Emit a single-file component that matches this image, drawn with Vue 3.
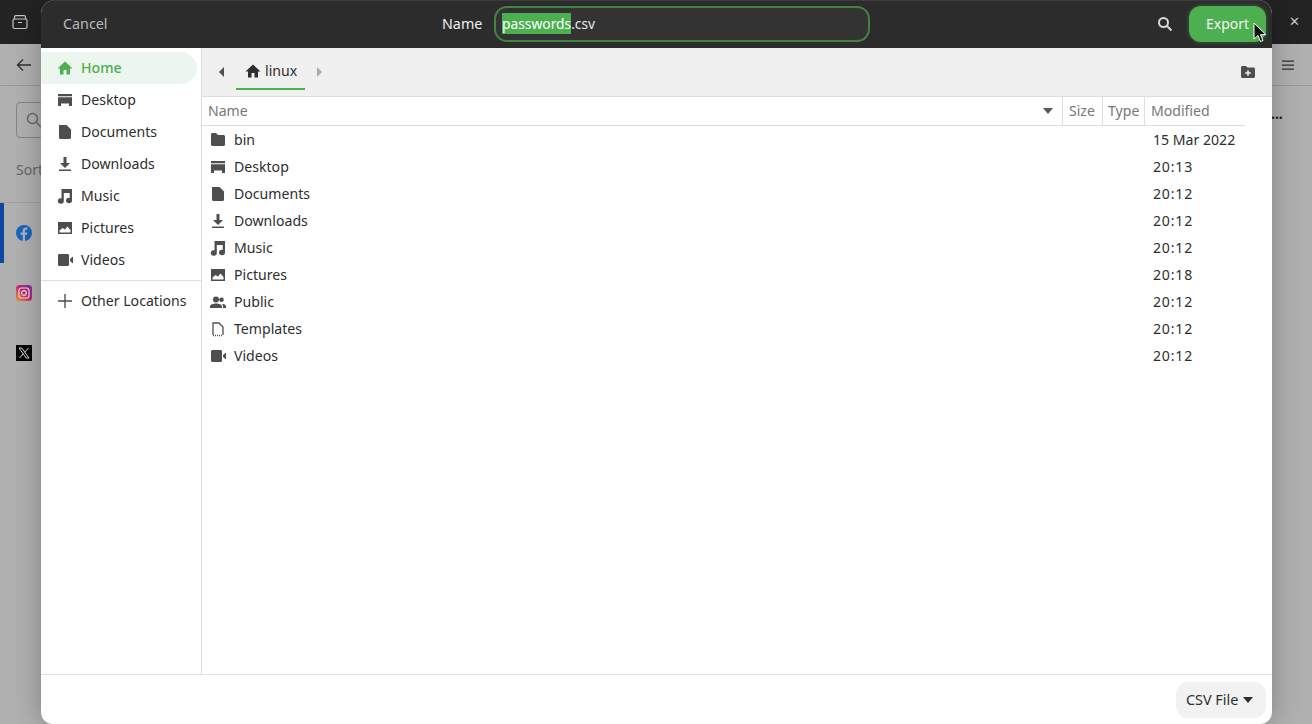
<script setup>
const sidebar = [
  { name: 'Desktop', icon: 'desktop' },
  { name: 'Documents', icon: 'doc' },
  { name: 'Downloads', icon: 'down' },
  { name: 'Music', icon: 'music' },
  { name: 'Pictures', icon: 'pic' },
  { name: 'Videos', icon: 'video' }
]
const files = [
  { name: 'bin', icon: 'folder', mod: '15 Mar 2022' },
  { name: 'Desktop', icon: 'desktop', mod: '20:13' },
  { name: 'Documents', icon: 'doc', mod: '20:12' },
  { name: 'Downloads', icon: 'down', mod: '20:12' },
  { name: 'Music', icon: 'music', mod: '20:12' },
  { name: 'Pictures', icon: 'pic', mod: '20:18' },
  { name: 'Public', icon: 'public', mod: '20:12' },
  { name: 'Templates', icon: 'tmpl', mod: '20:12' },
  { name: 'Videos', icon: 'video', mod: '20:12' }
]
const paths = {
  folder: 'M1 2.500C1 1.700 1.700 1 2.500 1H6l2 2h5.500c.8 0 1.500.7 1.500 1.500v8c0 .8-.7 1.500-1.500 1.500h-11C1.700 14 1 13.300 1 12.500z',
  desktop: 'M1 2h14v2.300H1zM1 5.300h14V14h-3v-2.600H4V14H1z',
  doc: 'M2 1h7.500L14 5.500v8c0 .8-.7 1.500-1.500 1.500h-9C2.700 15 2 14.300 2 13.500z',
  down: 'M6.500 1h3v6H13l-5 5-5-5h3.500zM2 13.500h12V15H2z',
  music: 'M4.500 1H15v11.500a3 2.700 0 1 1-2.300-2.600V5H6.800v8a3 2.700 0 1 1-2.300-2.600z',
  pic: 'M1 2h14v12H1zM2.500 12.500h11V10L10.500 6.500 8 9.500 5.500 8 2.500 10.500z',
  video: 'M1 3.500C1 2.700 1.700 2 2.500 2h8c.8 0 1.500.7 1.500 1.500v9c0 .8-.7 1.500-1.500 1.500h-8C1.700 14 1 13.300 1 12.500zM13 7l3-2.500v7L13 9z',
  public: 'M6 2.500a3 3 0 1 1 0 6 3 3 0 0 1 0-6zM11.500 3.500a2.300 2.300 0 1 1 0 4.600 2.300 2.300 0 0 1 0-4.600zM0 14v-1.500C0 10.500 3 9.500 6 9.500s6 1 6 3V14zM13 14v-1.700c0-1-.5-1.900-1.400-2.600 2.300.1 4.400 1 4.400 2.600V14z'
}
</script>

<template>
  <div class="desk">
    <header class="app-top">
      <svg class="archive" width="16" height="16" viewBox="0 0 16 16" fill="none" stroke="#c8c8c8" stroke-width="1.200">
        <rect x="1" y="5" width="14" height="9.500" rx="1.500" />
        <path d="M2.500 5V3c0-.8.5-1.300 1.300-1.300h8.400c.8 0 1.300.5 1.300 1.300v2M6 8.500h4" />
      </svg>
      <span class="app-close">✕</span>
    </header>
    <div class="app-nav">
      <svg width="16" height="16" viewBox="0 0 16 16" fill="none" stroke="#2e2e2e" stroke-width="1.300"><path d="M15 8H1.500M7 2.500 1.500 8 7 13.500" /></svg>
      <svg class="burger" width="14" height="14" viewBox="0 0 14 14" fill="#2e2e2e"><path d="M1 2.500h12v1.200H1zM1 6.500h12v1.200H1zM1 10.500h12v1.200H1z" /></svg>
    </div>
    <div class="app-search">
      <svg width="16" height="16" viewBox="0 0 16 16" fill="none" stroke="#6a6a6a" stroke-width="1.500"><circle cx="6.500" cy="6.500" r="5" /><path d="m10 10 5 5" /></svg>
    </div>
    <div class="app-sort">Sort</div>
    <div class="app-dots">...</div>
    <div class="app-rail">
      <div class="rail-item active">
        <svg width="16" height="16" viewBox="0 0 16 16"><circle cx="8" cy="8" r="8" fill="#1565c0" /><path d="M9 16V9.800h2l.4-2.400H9V6c0-.8.3-1.200 1.200-1.200h1.300V2.700c-.5-.1-1-.2-1.800-.2C8 2.500 6.700 3.700 6.700 5.700v1.700H4.500v2.400h2.200V16z" fill="#b0b0b0" /></svg>
      </div>
      <div class="rail-item">
        <svg width="16" height="16" viewBox="0 0 16 16" fill="none">
          <defs><linearGradient id="ig" x1="0" y1="1" x2="1" y2="0"><stop offset="0" stop-color="#e0a030" /><stop offset=".5" stop-color="#c8286a" /><stop offset="1" stop-color="#6a30b0" /></linearGradient></defs>
          <rect width="16" height="16" rx="3.500" fill="url(#ig)" />
          <rect x="3" y="3" width="10" height="10" rx="2.500" stroke="#e8d8e0" stroke-width="1.200" />
          <circle cx="8" cy="8" r="2.300" stroke="#e8d8e0" stroke-width="1.200" />
        </svg>
      </div>
      <div class="rail-item">
        <svg width="16" height="16" viewBox="0 0 16 16"><rect width="16" height="16" fill="#000" /><path d="M3 3h2.800l7.200 10h-2.800zM12.500 3 8.700 7.200M7.200 8.800 3.500 13" stroke="#ddd" stroke-width="1" fill="none" /></svg>
      </div>
    </div>

    <div class="dialog">
      <div class="d-head">
        <span class="cancel">Cancel</span>
        <div class="name-area">
          <span class="name-label">Name</span>
          <div class="name-input"><span class="sel">passwords</span>.csv</div>
        </div>
        <div class="head-right">
          <svg width="16" height="16" viewBox="0 0 16 16" fill="none" stroke="#d8d8d8" stroke-width="2"><circle cx="6.500" cy="6.500" r="4.500" /><path d="m10 10 4.500 4.500" /></svg>
          <button class="export">Export</button>
        </div>
      </div>
      <div class="d-body">
        <aside class="side">
          <div class="side-row on">
            <svg class="ic" width="16" height="16" viewBox="0 0 16 16" fill="#4caf50"><path d="M8 1.500 15.500 8.500H13V14.500H9.500V10h-3v4.500H3V8.500H.5z" /></svg>
            <span>Home</span>
          </div>
          <div v-for="s in sidebar" :key="s.name" class="side-row">
            <svg class="ic" width="16" height="16" viewBox="0 0 16 16" fill="#4e4e4e"><path :d="paths[s.icon]" fill-rule="evenodd" /></svg>
            <span>{{ s.name }}</span>
          </div>
          <div class="side-sep"></div>
          <div class="side-row other">
            <svg class="ic" width="16" height="16" viewBox="0 0 16 16" fill="#4e4e4e"><path d="M7.300 1h1.400v6.300H15v1.400H8.700V15H7.300V8.700H1V7.300h6.300z" /></svg>
            <span>Other Locations</span>
          </div>
        </aside>
        <main class="main">
          <div class="pathbar">
            <svg class="arrow" width="8" height="10" viewBox="0 0 8 10" fill="#4e4e4e"><path d="M6 0v10L1 5z" /></svg>
            <div class="crumb">
              <svg width="16" height="16" viewBox="0 0 16 16" fill="#2e2e2e"><path d="M8 1.500 15.500 8.500H13V14.500H9.500V10h-3v4.500H3V8.500H.5z" /></svg>
              <span>linux</span>
            </div>
            <svg class="arrow dim" width="8" height="10" viewBox="0 0 8 10" fill="#aaa"><path d="M2 0v10l5-5z" /></svg>
            <svg class="newfolder" width="16" height="16" viewBox="0 0 16 16" fill="#4e4e4e"><path fill-rule="evenodd" d="M1 3.500C1 2.700 1.700 2 2.500 2H6l1.500 1.500h6c.8 0 1.500.7 1.500 1.500v7.500c0 .8-.7 1.500-1.500 1.500h-11C1.700 14 1 13.300 1 12.500zM7.200 6.200v2H5.200v1.600h2v2h1.600v-2h2V8.200h-2v-2z" /></svg>
          </div>
          <div class="cols">
            <div class="col c-name">
              <span>Name</span>
              <svg width="10" height="6" viewBox="0 0 10 6" fill="#5a5a5a"><path d="M0 0h10L5 6z" /></svg>
            </div>
            <div class="col c-size">Size</div>
            <div class="col c-type">Type</div>
            <div class="col c-mod">Modified</div>
          </div>
          <div class="list">
            <div v-for="f in files" :key="f.name" class="frow">
              <svg v-if="f.icon === 'tmpl'" class="fic" width="16" height="16" viewBox="0 0 16 16" fill="none" stroke="#4e4e4e" stroke-width="1.300">
                <path d="M3 14V2h6l4 4v8" />
                <path d="M3 14.500h10" stroke-dasharray="1 1" />
              </svg>
              <svg v-else class="fic" width="16" height="16" viewBox="0 0 16 16" fill="#4e4e4e"><path :d="paths[f.icon]" fill-rule="evenodd" /></svg>
              <span class="fname">{{ f.name }}</span>
              <span class="fmod" :class="{ time: f.mod.length === 5 }">{{ f.mod }}</span>
            </div>
          </div>
        </main>
      </div>
      <div class="d-foot">
        <div class="filter">
          <span>CSV File</span>
          <svg width="10" height="6" viewBox="0 0 10 6" fill="#2e2e2e"><path d="M0 0h10L5 6z" /></svg>
        </div>
      </div>
      <svg class="cursor" width="14" height="22" viewBox="0 0 14 22"><path d="M1 1v16l4-3.500 2.500 6 2.500-1-2.500-5.800H13z" fill="#111" stroke="#fff" stroke-width="1" /></svg>
    </div>
  </div>
</template>

<style>
html, body { margin: 0; background: #afafaf; }
</style>

<style scoped>
.desk {
  position: relative;
  width: 1312px;
  height: 724px;
  overflow: hidden;
  background: #b0b0b0;
  font-family: "Noto Sans", sans-serif;
  font-size: 14.1px;
  line-height: 20px;
  color: #2e2e2e;
}
.app-top {
  height: 44px;
  background: #232323;
  display: flex;
  align-items: center;
  justify-content: space-between;
  padding: 0 12px;
  color: #c8c8c8;
}
.app-close { font-size: 13px; font-weight: 700; font-family: "DejaVu Sans", sans-serif; }
.app-nav {
  height: 41px;
  border-bottom: 1px solid #999;
  display: flex;
  align-items: center;
  justify-content: space-between;
  padding: 0 17px 0 16px;
}
.app-search {
  position: absolute;
  left: 16px;
  top: 102px;
  width: 60px;
  height: 34px;
  border: 1px solid #858585;
  border-radius: 4px;
  display: flex;
  align-items: center;
  padding-left: 9px;
}
.app-sort { position: absolute; left: 16px; top: 160px; color: #666; font-size: 14px; }
.app-dots { position: absolute; left: 1271px; top: 104px; font-weight: 700; color: #222; font-size: 14px; }
.app-rail { position: absolute; left: 0; top: 202px; width: 41px; border-top: 1px solid #a0a0a0; }
.rail-item {
  height: 60px;
  display: flex;
  align-items: center;
  padding-left: 16px;
  box-sizing: border-box;
}
.rail-item.active { box-shadow: inset 4px 0 0 #0d47a1; }
.dialog {
  position: absolute;
  left: 41px;
  top: 0;
  width: 1231px;
  height: 724px;
  background: #fff;
  border-radius: 14px 14px 12px 12px;
  box-shadow: 0 0 28px rgba(0, 0, 0, 0.28);
  display: flex;
  flex-direction: column;
  overflow: hidden;
}
.d-head {
  height: 48px;
  flex: none;
  background: #2c2c2c;
  color: #f0f0f0;
  display: flex;
  align-items: center;
  position: relative;
  box-shadow: inset 0 1px 0 #3c3c3c;
  box-sizing: border-box;
}
.cancel { margin-left: 22px; color: #b8b8b8; font-size: 14.3px; }
.name-area {
  position: absolute;
  left: 401px;
  top: 6px;
  display: flex;
  align-items: center;
}
.name-label { width: 52px; font-size: 14.3px; }
.name-input {
  width: 366px;
  height: 32px;
  line-height: 32px;
  border: 2px solid #3f8443;
  border-radius: 13px;
  background: #333;
  padding-left: 6px;
  color: #e8e8e8;
  font-size: 13.8px;
}
.sel { background: #4caf50; color: #fff; display: inline-block; height: 21px; line-height: 21px; }
.head-right {
  margin-left: auto;
  display: flex;
  align-items: center;
  gap: 16px;
  padding-right: 6px;
}
.export {
  width: 77px;
  height: 36px;
  border: 0;
  border-radius: 12px;
  background: #4caf50;
  color: #f4f4f4;
  font: inherit;
  font-size: 14px;
  box-shadow: 0 0 4px rgba(76, 175, 80, 0.5);
  padding: 0;
}
.d-body { flex: 1; display: flex; min-height: 0; }
.side {
  width: 160px;
  flex: none;
  border-right: 1px solid #dedede;
  padding-top: 4px;
  box-sizing: content-box;
}
.side-row {
  height: 32px;
  width: 156px;
  display: flex;
  align-items: center;
  gap: 8px;
  padding-left: 16px;
  box-sizing: border-box;
  white-space: nowrap;
}
.side-row .ic { flex: none; }
.side-row.on {
  background: #edf6ee;
  color: #4caf50;
  border-radius: 0 16px 16px 0;
  font-weight: 500;
}
.side-sep { height: 1px; background: #e0e0e0; margin-top: 4px; }
.side-row.other { margin-top: 4px; }
.main { flex: 1; min-width: 0; display: flex; flex-direction: column; }
.pathbar {
  height: 49px;
  flex: none;
  box-sizing: border-box;
  background: #f0f0f0;
  border-bottom: 1px solid #dedede;
  display: flex;
  align-items: center;
  padding-left: 16px;
}
.crumb {
  height: 36px;
  width: 69px;
  margin-left: 10px;
  padding-left: 9px;
  display: flex;
  align-items: center;
  gap: 4px;
  box-sizing: border-box;
  border-bottom: 2px solid #4caf50;
}
.arrow.dim { margin-left: 10px; }
.newfolder { margin-left: auto; margin-right: 16px; }
.cols {
  height: 29px;
  flex: none;
  box-sizing: border-box;
  width: 1043px;
  display: flex;
  color: #777;
  border-bottom: 1px solid #dedede;
}
.col {
  display: flex;
  align-items: center;
  box-sizing: border-box;
  padding-left: 6px;
  border-right: 1px solid #dedede;
}
.c-name { width: 861px; justify-content: space-between; padding-right: 9px; }
.c-size { width: 40px; }
.c-type { width: 42px; padding-left: 5px; }
.c-mod { flex: 1; border-right: 0; }
.list { flex: 1; }
.frow {
  height: 27px;
  display: flex;
  align-items: center;
  padding-left: 8px;
  color: #2e2e2e;
}
.fic { flex: none; }
.fname { margin-left: 8px; width: 919px; flex: none; }
.fmod.time { letter-spacing: 0.8px; }
.d-foot {
  height: 50px;
  flex: none;
  box-sizing: border-box;
  border-top: 1px solid #e0e0e0;
  display: flex;
  align-items: center;
  justify-content: flex-end;
  padding-right: 6px;
}
.filter {
  width: 90px;
  height: 36px;
  border-radius: 12px;
  background: #f2f2f2;
  display: flex;
  align-items: center;
  gap: 5px;
  padding-left: 10px;
  box-sizing: border-box;
  font-size: 14.4px;
}
.cursor { position: absolute; left: 1212px; top: 22px; }
</style>
